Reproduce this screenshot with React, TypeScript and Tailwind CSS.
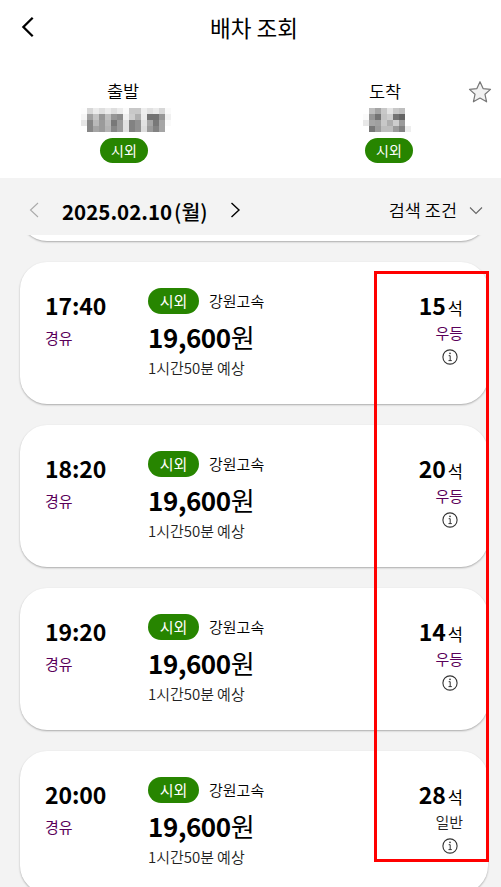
const trips = [
  { time: '17:40', seats: 15, grade: '우등', premium: true },
  { time: '18:20', seats: 20, grade: '우등', premium: true },
  { time: '19:20', seats: 14, grade: '우등', premium: true },
  { time: '20:00', seats: 28, grade: '일반', premium: false },
]

// Grey levels of the masked terminal names, one 6px block per entry
const departureMask = [
  [253, 215, 235, 222, 235, 222, 235, 250, 200, 200, 238, 225, 235, 215, 250],
  [245, 160, 195, 150, 190, 150, 140, 240, 205, 175, 235, 115, 115, 150, 240],
  [230, 135, 185, 155, 185, 120, 155, 225, 130, 145, 225, 165, 120, 165, 250],
  [255, 135, 165, 155, 180, 135, 155, 225, 130, 145, 220, 155, 130, 165, 255],
]
const arrivalMask = [
  [255, 190, 165, 200, 228, 200, 190, 255],
  [250, 150, 115, 195, 205, 115, 100, 255],
  [232, 165, 160, 200, 175, 205, 155, 255],
  [255, 120, 155, 190, 190, 155, 130, 238],
]

function Mask({ rows }: { rows: number[][] }) {
  return (
    <div>
      {rows.map((row, y) => (
        <div key={y} className="flex">
          {row.map((v, x) => (
            <span key={x} className="size-1.5" style={{ backgroundColor: `rgb(${v},${v},${v})` }} />
          ))}
        </div>
      ))}
    </div>
  )
}

function InfoIcon() {
  return (
    <svg width="16" height="16" viewBox="0 0 16 16" fill="none" stroke="#333" className="block">
      <circle cx="8" cy="8" r="7.1" strokeWidth="1.1" />
      <path d="M6.7 6.7H8.2V11.5M6.5 11.6H9.8" strokeWidth="1" />
      <circle cx="8" cy="4.4" r=".8" fill="#333" stroke="none" />
    </svg>
  )
}

function TripCard({ trip }: { trip: (typeof trips)[number] }) {
  return (
    <div className="flex h-[142px] shrink-0 rounded-[27px] bg-white px-[25px] shadow-[0_1px_2px_rgba(0,0,0,0.3)]">
      <div className="w-[103px] pt-[27px]">
        <div className="text-[23px] leading-8 font-bold tracking-[-0.1px]">{trip.time}</div>
        <div className="mt-[5px] text-[15px] leading-6 text-[#5a005a]">경유</div>
      </div>
      <div className="flex-1 pt-[26px]">
        <div className="flex items-center gap-2.5">
          <span className="flex h-[26px] w-[51px] items-center justify-center rounded-full bg-[#278500] text-[15px] text-white">시외</span>
          <span className="text-[15px] leading-6 font-[350]">강원고속</span>
        </div>
        <div className="mt-[5px] text-[26px] leading-9 tracking-[-0.4px]">
          <span className="font-bold">19,600</span>원
        </div>
        <div className="mt-px text-[15px] leading-6 font-[350] text-[#222]">
          1시간50분<span className="ml-[3px]">예상</span>
        </div>
      </div>
      <div className="flex flex-col items-end pt-[27px]">
        <div className="flex items-baseline gap-0.5 leading-8">
          <span className="text-[23px] font-bold">{trip.seats}</span>
          <span className="text-[16.5px]">석</span>
        </div>
        <div className={`-mt-[3px] text-[15px] leading-6 ${trip.premium ? 'text-[#5a005a]' : 'font-[350] text-[#222]'}`}>{trip.grade}</div>
        <div className="mt-1 mr-[5px]">
          <InfoIcon />
        </div>
      </div>
    </div>
  )
}

export default function App() {
  return (
    <div className="relative flex h-[887px] w-[501px] flex-col overflow-hidden bg-[#f3f3f3] font-['Noto_Sans_CJK_KR',sans-serif] text-black">
      <div className="h-[178px] shrink-0 bg-white">
        <header className="flex h-[54px] items-center pl-[21px]">
          <svg width="14" height="22" viewBox="0 0 14 22" fill="none" stroke="#000" strokeWidth="2.3">
            <path d="M11.7 1.8L2.4 11L11.7 20.2" />
          </svg>
          <h1 className="ml-[175px] text-[22.5px] leading-8">배차 조회</h1>
        </header>
        <div className="flex pt-[25px]">
          <div className="flex w-[248px] flex-col items-center">
            <span className="mr-0.5 text-[17.5px] leading-6 font-[350]">출발</span>
            <div className="mt-[5px] ml-1"><Mask rows={departureMask} /></div>
            <span className="mt-[6px] flex h-[25px] w-12 items-center justify-center rounded-full bg-[#278500] text-[14px] text-white">시외</span>
          </div>
          <div className="ml-[96px] flex w-[90px] flex-col items-center">
            <span className="mr-2 text-[17.5px] leading-6 font-[350]">도착</span>
            <div className="mt-[5px] mr-1"><Mask rows={arrivalMask} /></div>
            <span className="mt-[6px] flex h-[25px] w-12 items-center justify-center rounded-full bg-[#278500] text-[14px] text-white">시외</span>
          </div>
          <svg width="24" height="24" viewBox="0 0 24 24" className="mt-px ml-[34px]" fill="#f2f2f2" stroke="#777" strokeWidth="1.2" strokeLinejoin="round">
            <path d="M12 1.7L15.1 8.6L22.5 9.4L17 14.3L18.6 21.8L12 18L5.4 21.8L7 14.3L1.5 9.4L8.9 8.6Z" />
          </svg>
        </div>
      </div>

      <div className="flex h-[57px] shrink-0 items-center pt-[7px] pl-[29px]">
        <svg width="10" height="16" viewBox="0 0 10 16" fill="none" stroke="#aaa" strokeWidth="1.1">
          <path d="M9 1L1.5 8L9 15" />
        </svg>
        <span className="ml-[23px] w-[146px] pt-0.5 text-[20.5px] font-bold whitespace-nowrap">
          2025.02.10<span className="ml-0.5 font-medium">(월)</span>
        </span>
        <svg width="11" height="16" viewBox="0 0 11 16" className="ml-[22px]" fill="none" stroke="#000" strokeWidth="1.4">
          <path d="M1.5 1L9 8L1.5 15" />
        </svg>
        <span className="ml-auto text-[17.5px] font-[350]">검색 조건</span>
        <svg width="14" height="9" viewBox="0 0 14 9" className="mr-[18px] ml-3" fill="none" stroke="#666" strokeWidth="1.1">
          <path d="M1 1.5L7 7.5L13 1.5" />
        </svg>
      </div>

      <div className="h-[27px] shrink-0 overflow-hidden pr-[13px] pl-5">
        <div className="-mt-[94px] h-[100px] rounded-[27px] bg-white shadow-[0_1px_2px_rgba(0,0,0,0.3)]" />
      </div>
      <div className="flex flex-col gap-[21px] pr-[13px] pl-5">
        {trips.map((trip) => (
          <TripCard key={trip.time} trip={trip} />
        ))}
      </div>

      {/* Seat column highlight */}
      <div className="absolute top-[271px] left-[374px] h-[591px] w-[115px] border-3 border-[#f00]" />
    </div>
  )
}
